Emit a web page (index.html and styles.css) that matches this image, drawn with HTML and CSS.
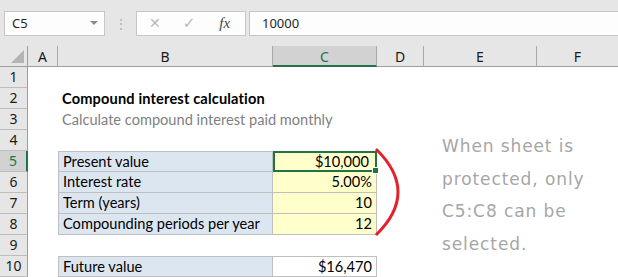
FILE: index.html
```html
<!DOCTYPE html>
<html lang="en">
<head>
    <meta charset="UTF-8">
    <title>Compound interest</title>
    <link rel="stylesheet" href="styles.css">
</head>
<body>
    <div class="app">
        <!-- formula bar -->
        <div class="toolbar">
            <div class="name-box">
                <span>C5</span>
                <span class="drop"></span>
            </div>
            <div class="grip">&#8942;</div>
            <div class="fx-buttons">
                <span class="btn-x">&#10005;</span>
                <span class="btn-ok">&#10003;</span>
                <span class="btn-fx">fx</span>
            </div>
            <div class="formula">10000</div>
        </div>

        <!-- sheet -->
        <div class="sheet">
            <div class="corner"><span class="tri"></span></div>
            <div class="col-h">A</div>
            <div class="col-h">B</div>
            <div class="col-h active">C</div>
            <div class="col-h">D</div>
            <div class="col-h">E</div>
            <div class="col-h last">F</div>

            <div class="row-h">1</div>
            <div class="cell span6"></div>

            <div class="row-h">2</div>
            <div class="cell"></div>
            <div class="cell title span5">Compound interest calculation</div>

            <div class="row-h">3</div>
            <div class="cell"></div>
            <div class="cell sub span5">Calculate compound interest paid monthly</div>

            <div class="row-h">4</div>
            <div class="cell span6"></div>

            <div class="row-h active">5</div>
            <div class="cell"></div>
            <div class="cell label first">Present value</div>
            <div class="cell input first selected">$10,000<span class="handle"></span></div>
            <div class="cell span3"></div>

            <div class="row-h">6</div>
            <div class="cell"></div>
            <div class="cell label">Interest rate</div>
            <div class="cell input">5.00%</div>
            <div class="cell span3"></div>

            <div class="row-h">7</div>
            <div class="cell"></div>
            <div class="cell label">Term (years)</div>
            <div class="cell input">10</div>
            <div class="cell span3"></div>

            <div class="row-h">8</div>
            <div class="cell"></div>
            <div class="cell label">Compounding periods per year</div>
            <div class="cell input">12</div>
            <div class="cell span3"></div>

            <div class="row-h">9</div>
            <div class="cell span6"></div>

            <div class="row-h">10</div>
            <div class="cell"></div>
            <div class="cell label first">Future value</div>
            <div class="cell output first">$16,470</div>
            <div class="cell span3"></div>
        </div>

        <!-- callout over the sheet -->
        <svg class="bracket" width="618" height="277" viewBox="0 0 618 277">
            <path d="M376 149 Q420 192 376 235" fill="none" stroke="#e3202b" stroke-width="3"/>
        </svg>
        <div class="note">When sheet is<br>protected, only<br>C5:C8 can be<br>selected.</div>
    </div>
</body>
</html>
```

FILE: styles.css
```css
body {
    margin: 0;
    background: #ffffff;
    font-family: "Lato", "Liberation Sans", sans-serif;
}
.app {
    position: relative;
    width: 618px;
    height: 277px;
    overflow: hidden;
}

/* formula bar */
.toolbar {
    display: flex;
    align-items: center;
    height: 46px;
    padding-left: 4px;
    box-sizing: border-box;
    background: #e6e6e6;
    font-family: "Noto Sans", "Liberation Sans", sans-serif;
    font-size: 13px;
    color: #262626;
}
.name-box {
    display: flex;
    align-items: center;
    justify-content: space-between;
    width: 101px;
    height: 25px;
    padding: 0 6px 0 7px;
    box-sizing: border-box;
    background: #fdfdfd;
    border: 1px solid #c6c6c6;
}
.drop {
    width: 0;
    height: 0;
    border-left: 4px solid transparent;
    border-right: 4px solid transparent;
    border-top: 4px solid #8a8a8a;
}
.grip {
    width: 31px;
    text-align: center;
    color: #b5b5b5;
    font-size: 14px;
}
.fx-buttons {
    display: flex;
    align-items: center;
    width: 110px;
    height: 25px;
    box-sizing: border-box;
    background: #fdfdfd;
    border: 1px solid #c6c6c6;
    color: #b8b8b8;
    font-family: "DejaVu Sans", sans-serif;
}
.btn-x {
    margin-left: 12px;
    font-size: 14px;
}
.btn-ok {
    margin-left: 22px;
    font-size: 15px;
}
.btn-fx {
    margin-left: 24px;
    font-family: "Liberation Serif", serif;
    font-style: italic;
    font-size: 15px;
    color: #444444;
}
.formula {
    flex: 1;
    height: 25px;
    margin-left: 3px;
    padding-left: 12px;
    box-sizing: border-box;
    line-height: 23px;
    background: #fdfdfd;
    border: 1px solid #c6c6c6;
    border-right: none;
}

/* grid */
.sheet {
    display: grid;
    grid-template-columns: 28px 30px 215px 104px 47px 113px 81px;
    grid-template-rows: 21px repeat(10, 21px);
    font-size: 14.6px;
    color: #000000;
}
.corner {
    position: relative;
    background: #e6e6e6;
    border-right: 1px solid #9e9e9e;
    border-bottom: 1px solid #9e9e9e;
    box-sizing: border-box;
}
.tri {
    position: absolute;
    right: 3px;
    bottom: 3px;
    width: 0;
    height: 0;
    border-left: 13px solid transparent;
    border-bottom: 13px solid #b4b4b4;
}
.col-h {
    background: #e6e6e6;
    border-right: 1px solid #a8a8a8;
    border-bottom: 1px solid #9e9e9e;
    box-sizing: border-box;
    text-align: center;
    line-height: 21px;
    font-family: "Noto Sans", "Liberation Sans", sans-serif;
    font-size: 14px;
    color: #1a1a1a;
}
.col-h.last {
    border-right: none;
}
.col-h.active {
    background: #d2d2d2;
    border-bottom: 2px solid #217346;
    color: #217346;
}
.row-h {
    background: #e6e6e6;
    border-right: 1px solid #9e9e9e;
    border-bottom: 1px solid #bdbdbd;
    box-sizing: border-box;
    text-align: center;
    line-height: 20px;
    font-family: "Noto Sans", "Liberation Sans", sans-serif;
    font-size: 14px;
    color: #1a1a1a;
}
.row-h.active {
    background: #d2d2d2;
    border-right: 2px solid #217346;
    color: #217346;
}
.cell {
    line-height: 21px;
    white-space: nowrap;
    box-sizing: border-box;
}
.span6 { grid-column: span 6; }
.span5 { grid-column: span 5; }
.span3 { grid-column: span 3; }

.title {
    padding-left: 4px;
    font-weight: 700;
    letter-spacing: 0.15px;
}
.sub {
    padding-left: 4px;
    color: #7f7f7f;
}

/* table block */
.label,
.input,
.output {
    line-height: 20px;
    border-right: 1px solid #bfbfbf;
    border-bottom: 1px solid #bfbfbf;
}
.label {
    padding-left: 4px;
    background: #dce6f1;
    border-left: 1px solid #bfbfbf;
}
.input,
.output {
    padding-right: 4px;
    text-align: right;
}
.input {
    background: #ffffcc;
}
.output {
    background: #ffffff;
}
.first {
    border-top: 1px solid #bfbfbf;
    line-height: 19px;
}
.selected {
    position: relative;
    border: 2px solid #217346;
    line-height: 17px;
    padding-right: 6px;
}
.handle {
    position: absolute;
    right: -4px;
    bottom: -4px;
    width: 5px;
    height: 5px;
    background: #217346;
    border: 1px solid #ffffff;
}

/* callout */
.bracket {
    position: absolute;
    left: 0;
    top: 0;
    pointer-events: none;
}
.note {
    position: absolute;
    left: 442px;
    top: 130px;
    line-height: 32.5px;
    font-family: "DejaVu Sans", sans-serif;
    font-size: 17px;
    letter-spacing: 0.9px;
    color: #a6a6a6;
}
```
